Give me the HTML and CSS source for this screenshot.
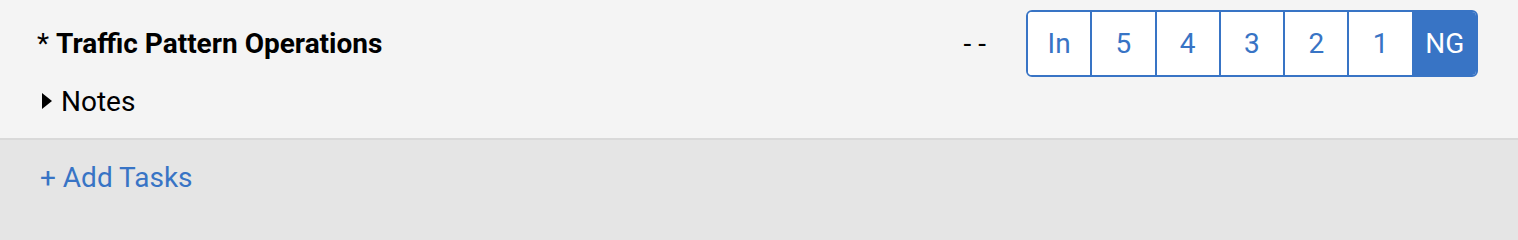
FILE: index.html
```html
<!DOCTYPE html>
<html lang="en">
<head>
<meta charset="utf-8">
<title>Task</title>
<link rel="stylesheet" href="styles.css">
</head>
<body>
<div class="panel">
  <div class="task-row">
    <div class="task-main">
      <div class="task-title"><span>* <strong>Traffic Pattern Operations</strong></span></div>
      <div class="task-notes"><span class="caret"></span><span>Notes</span></div>
    </div>
    <div class="task-grade">
      <span class="grade-value">- -</span>
      <div class="grade-group">
        <button class="grade-btn">In</button>
        <button class="grade-btn">5</button>
        <button class="grade-btn">4</button>
        <button class="grade-btn">3</button>
        <button class="grade-btn">2</button>
        <button class="grade-btn">1</button>
        <button class="grade-btn active">NG</button>
      </div>
    </div>
  </div>
  <div class="add-row"><span class="add-link">+ Add Tasks</span></div>
</div>
</body>
</html>
```
FILE: styles.css
```css
html, body {
  margin: 0;
  padding: 0;
}
body {
  font-family: Roboto, "Liberation Sans", Arial, sans-serif;
  font-size: 28px;
  color: #000;
  background: #e5e5e5;
  width: 1518px;
  height: 212px;
  overflow: hidden;
}
.panel {
  display: flex;
  flex-direction: column;
  height: 212px;
}
.task-row {
  display: flex;
  justify-content: space-between;
  align-items: flex-start;
  background: #f4f4f4;
  padding: 10px 40px 13px 37px;
  border-bottom: 2px solid #d9d9d9;
}
.task-main {
  display: flex;
  flex-direction: column;
}
.task-title {
  height: 67px;
  display: flex;
  align-items: center;
}
.task-title strong {
  font-weight: 700;
}
.task-notes {
  height: 48px;
  display: flex;
  align-items: center;
  padding-left: 5px;
  gap: 9px;
}
.caret {
  width: 0;
  height: 0;
  border-left: 10px solid #000;
  border-top: 8.5px solid transparent;
  border-bottom: 8.5px solid transparent;
}
.task-grade {
  display: flex;
  align-items: center;
  height: 67px;
}
.grade-value {
  margin-right: 40px;
  white-space: pre;
}
.grade-group {
  display: flex;
  width: 452px;
  height: 67px;
  box-sizing: border-box;
  border: 2px solid #3874c5;
  border-radius: 6px;
  overflow: hidden;
  background: #fff;
}
.grade-btn {
  flex: 1;
  border: 0;
  border-left: 2px solid #3874c5;
  background: #fff;
  color: #3874c5;
  font-family: inherit;
  font-size: 28px;
  padding: 0;
  margin: 0;
}
.grade-btn:first-child {
  border-left: 0;
}
.grade-btn.active {
  background: #3874c5;
  color: #fff;
}
.add-row {
  flex: 1;
  display: flex;
  align-items: center;
  padding-left: 40px;
  padding-top: 2px;
  background: #e5e5e5;
}
.add-link {
  color: #3874c5;
}
```
